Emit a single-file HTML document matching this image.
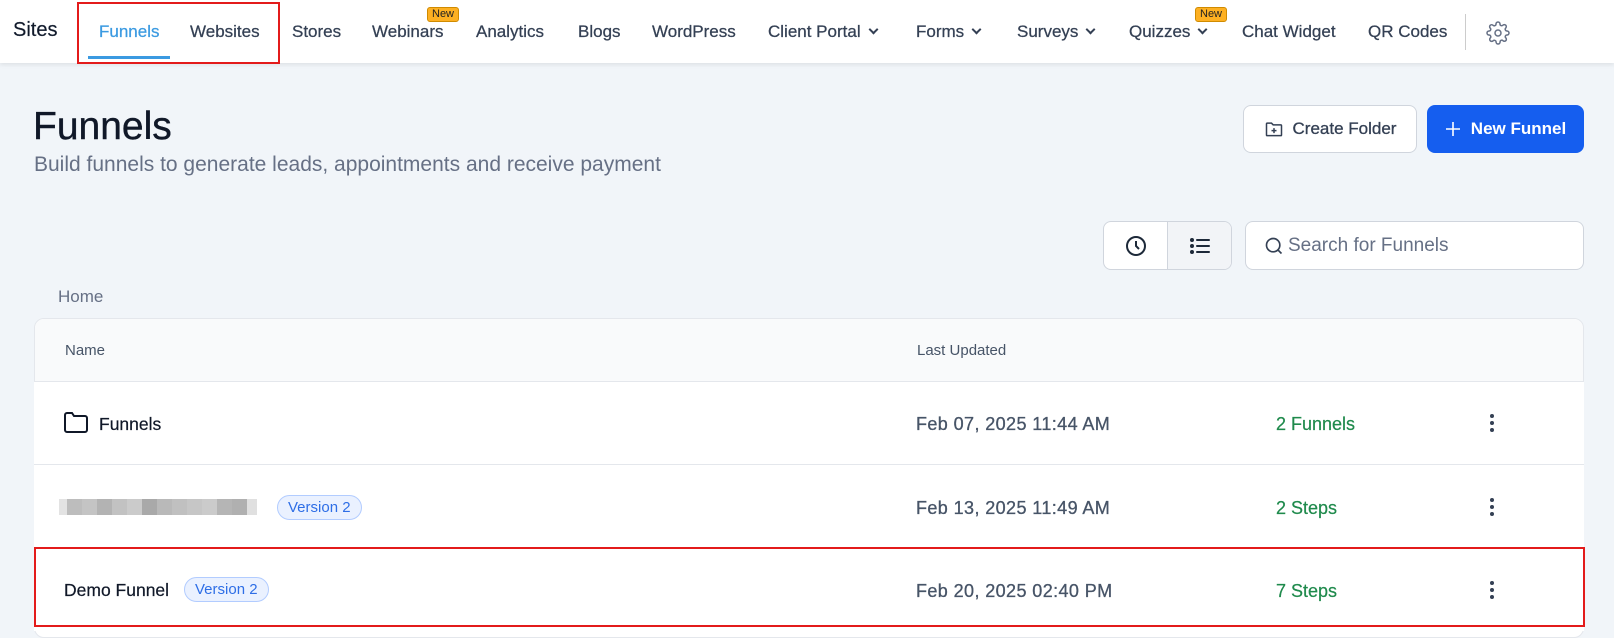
<!DOCTYPE html>
<html><head><style>
*{box-sizing:border-box;margin:0;padding:0}
body{width:1614px;height:629px;overflow:hidden;background:#f1f5f9;font-family:"Liberation Sans",sans-serif;position:relative;color:#101828}
.nav{position:absolute;left:0;top:0;width:1614px;height:63px;background:#fff;box-shadow:0 2px 4px rgba(0,0,0,.08)}
.nav span{position:absolute;top:22px;font-size:17px;color:#344054;white-space:nowrap;-webkit-text-stroke:0.25px #344054}
.chev{display:inline-block;width:7px;height:7px;border-right:2px solid #344054;border-bottom:2px solid #344054;transform:rotate(45deg);margin-left:9px;position:relative;top:-4px}
.new{position:absolute;top:7px;background:#fdb022;border:1px solid #d08b00;border-radius:3px;font-size:11px;color:#222;padding:0 4px;line-height:13px}
.abs{position:absolute}
.btn{position:absolute;border-radius:8px;font-size:17px;font-weight:bold;display:flex;align-items:center;justify-content:center}
.row{position:absolute;left:34px;width:1550px;background:#fff;border-top:1px solid #e4e7ec}
.row .d{position:absolute;left:882px;font-size:18px;letter-spacing:0.4px;color:#475467;-webkit-text-stroke:0.3px #475467}
.row .c{position:absolute;left:1242px;font-size:18px;color:#1f8a4c;-webkit-text-stroke:0.2px #1f8a4c}
.dots{position:absolute;left:1456px;width:4px}
.dots i{display:block;width:4px;height:4px;border-radius:2px;background:#344054;margin-bottom:3px}
.badge{display:inline-block;border:1px solid #b2ccff;background:#eaf1ff;color:#2e6ee6;border-radius:14px;font-size:15px;padding:3px 10px}
.blur{position:absolute;left:25px;top:34px;height:16px;display:flex}
.blur b{display:block;width:15px;height:16px}
</style></head><body>
<div class="nav">
<span style="left:13px;font-size:20px;color:#101828;top:19px">Sites</span>
<span style="left:99px;color:#3b9ae1;-webkit-text-stroke:0.25px #3b9ae1">Funnels</span>
<div class="abs" style="left:88px;top:56px;width:82px;height:3px;background:#3b9ae1"></div>
<span style="left:190px">Websites</span>
<span style="left:292px">Stores</span>
<span style="left:372px">Webinars</span><div class="new" style="left:427px">New</div>
<span style="left:476px">Analytics</span>
<span style="left:578px">Blogs</span>
<span style="left:652px">WordPress</span>
<span style="left:768px">Client Portal<i class="chev"></i></span>
<span style="left:916px">Forms<i class="chev"></i></span>
<span style="left:1017px">Surveys<i class="chev"></i></span>
<span style="left:1129px">Quizzes<i class="chev"></i></span><div class="new" style="left:1195px">New</div>
<span style="left:1242px">Chat Widget</span>
<span style="left:1368px">QR Codes</span>
<div class="abs" style="left:1465px;top:14px;width:1px;height:36px;background:#ccc"></div>
<svg class="abs" style="left:1486px;top:21px" width="24" height="24" viewBox="0 0 24 24" fill="none" stroke="#667085" stroke-width="1.5"><circle cx="12" cy="12" r="3"/><path d="M19.4 15a1.65 1.65 0 0 0 .33 1.820l.06.06a2 2 0 1 1-2.830 2.830l-.06-.06a1.65 1.65 0 0 0-1.820-.33 1.65 1.65 0 0 0-1 1.510V21a2 2 0 1 1-4 0v-.09A1.65 1.65 0 0 0 9 19.4a1.65 1.65 0 0 0-1.820.33l-.06.06a2 2 0 1 1-2.830-2.830l.06-.06A1.65 1.65 0 0 0 4.6 15a1.65 1.65 0 0 0-1.510-1H3a2 2 0 1 1 0-4h.09A1.65 1.65 0 0 0 4.6 9a1.65 1.65 0 0 0-.33-1.820l-.06-.06a2 2 0 1 1 2.830-2.830l.06.06A1.65 1.65 0 0 0 9 4.6a1.65 1.65 0 0 0 1-1.510V3a2 2 0 1 1 4 0v.09a1.65 1.65 0 0 0 1 1.510 1.65 1.65 0 0 0 1.820-.33l.06-.06a2 2 0 1 1 2.830 2.830l-.06.06A1.65 1.65 0 0 0 19.4 9a1.65 1.65 0 0 0 1.510 1H21a2 2 0 1 1 0 4h-.09a1.65 1.65 0 0 0-1.510 1z"/></svg>
</div>
<div class="abs" style="left:77px;top:2px;width:203px;height:62px;border:2px solid #e31b1b"></div>

<div class="abs" style="left:33px;top:105px;font-size:39px;color:#101828;-webkit-text-stroke:0.4px #101828">Funnels</div>
<div class="abs" style="left:34px;top:153px;font-size:21px;color:#667085">Build funnels to generate leads, appointments and receive payment</div>

<div class="btn" style="left:1243px;top:105px;width:174px;height:48px;background:#fff;border:1px solid #d0d5dd;color:#344054;font-weight:normal;-webkit-text-stroke:0.3px #344054">
<svg width="20" height="20" viewBox="0 0 24 24" fill="none" stroke="#344054" stroke-width="1.8" style="margin-right:9px"><path d="M3 6a1 1 0 0 1 1-1h5l2 2h9a1 1 0 0 1 1 1v11a1 1 0 0 1-1 1H4a1 1 0 0 1-1-1z"/><path d="M12 11v6M9 14h6"/></svg>Create Folder</div>
<div class="btn" style="left:1427px;top:105px;width:157px;height:48px;background:#155eef;color:#fff">
<svg width="16" height="16" viewBox="0 0 16 16" stroke="#fff" stroke-width="1.6" style="margin-right:10px"><path d="M8 1v14M1 8h14"/></svg>New Funnel</div>

<div class="abs" style="left:1103px;top:221px;width:129px;height:49px;background:#fff;border:1px solid #d0d5dd;border-radius:8px;overflow:hidden">
<div class="abs" style="left:63px;top:0;width:66px;height:49px;background:#f2f4f7;border-left:1px solid #d0d5dd"></div>
<svg class="abs" style="left:20px;top:12px" width="24" height="24" viewBox="0 0 24 24" fill="none" stroke="#1d2939" stroke-width="2"><circle cx="12" cy="12" r="9"/><path d="M12 7v5l3 3"/></svg>
<svg class="abs" style="left:84px;top:12px" width="24" height="24" viewBox="0 0 24 24" fill="none" stroke="#1d2939" stroke-width="2" stroke-linecap="round"><path d="M9 6h12M9 12h12M9 18h12"/><circle cx="4" cy="6" r="1" fill="#1d2939"/><circle cx="4" cy="12" r="1" fill="#1d2939"/><circle cx="4" cy="18" r="1" fill="#1d2939"/></svg>
</div>
<div class="abs" style="left:1245px;top:221px;width:339px;height:49px;background:#fff;border:1px solid #d0d5dd;border-radius:8px">
<svg class="abs" style="left:18px;top:14px" width="20" height="20" viewBox="0 0 24 24" fill="none" stroke="#344054" stroke-width="2"><circle cx="11" cy="11" r="8"/><path d="M21 21l-4.3-4.3"/></svg>
<span class="abs" style="left:42px;top:13px;font-size:19px;color:#667085">Search for Funnels</span></div>

<div class="abs" style="left:58px;top:287px;font-size:17px;color:#667085">Home</div>

<div class="abs" style="left:34px;top:318px;width:1550px;height:320px;background:#fff;border:1px solid #e4e7ec;border-radius:10px;overflow:hidden">
<div class="abs" style="left:0;top:0;width:1550px;height:63px;background:#f9fafb"></div>
<span class="abs" style="left:30px;top:23px;font-size:15px;color:#475467">Name</span>
<span class="abs" style="left:882px;top:23px;font-size:15px;color:#475467">Last Updated</span>
</div>
<div class="row" style="top:381px;height:84px">
<svg class="abs" style="left:30px;top:30px" width="24" height="22" viewBox="0 0 24 22" fill="none" stroke="#101828" stroke-width="2"><path d="M1 3a2 2 0 0 1 2-2h5l2 3h11a2 2 0 0 1 2 2v12a2 2 0 0 1-2 2H3a2 2 0 0 1-2-2z"/></svg>
<span class="abs" style="left:65px;top:32px;font-size:17.5px;-webkit-text-stroke:0.2px #101828">Funnels</span>
<span class="d" style="top:32px">Feb 07, 2025 11:44 AM</span><span class="c" style="top:32px">2 Funnels</span>
<div class="dots" style="top:32px"><i></i><i></i><i></i></div>
</div>
<div class="row" style="top:464px;height:84px">
<div class="blur"><b style="background:#e3e3e3;width:8px"></b><b style="background:#bdbdbd"></b><b style="background:#c4c4c4"></b><b style="background:#b3b3b3"></b><b style="background:#c2c2c2"></b><b style="background:#cbcbcb"></b><b style="background:#a9a9a9"></b><b style="background:#b9b9b9"></b><b style="background:#c0c0c0"></b><b style="background:#c6c6c6"></b><b style="background:#cbcbcb"></b><b style="background:#b5b5b5"></b><b style="background:#b0b0b0"></b><b style="background:#e0e0e0;width:10px"></b></div>
<div class="abs" style="left:243px;top:30px"><span class="badge">Version 2</span></div>
<span class="d" style="top:33px">Feb 13, 2025 11:49 AM</span><span class="c" style="top:33px">2 Steps</span>
<div class="dots" style="top:33px"><i></i><i></i><i></i></div>
</div>
<div class="row" style="top:547px;height:84px">
<span class="abs" style="left:30px;top:32px;font-size:17.5px;-webkit-text-stroke:0.2px #101828">Demo Funnel</span>
<div class="abs" style="left:150px;top:29px"><span class="badge">Version 2</span></div>
<span class="d" style="top:33px">Feb 20, 2025 02:40 PM</span><span class="c" style="top:33px">7 Steps</span>
<div class="dots" style="top:33px"><i></i><i></i><i></i></div>
</div>
<div class="abs" style="left:34px;top:547px;width:1551px;height:80px;border:2px solid #e31b1b"></div>
</body></html>
